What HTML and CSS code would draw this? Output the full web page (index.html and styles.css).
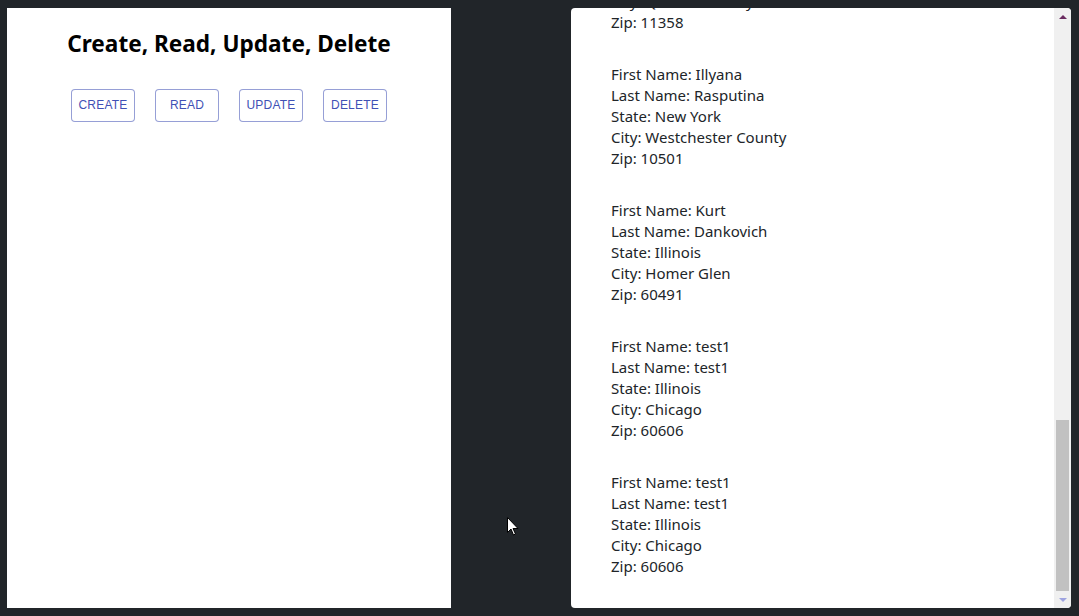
FILE: index.html
```html
<!DOCTYPE html>
<html>
<head>
<meta charset="utf-8">
<link rel="stylesheet" href="styles.css">
</head>
<body>
<div class="app">
  <section class="crud">
    <h1 class="title">Create, Read, Update, Delete</h1>
    <div class="actions">
      <button class="btn">CREATE</button>
      <button class="btn">READ</button>
      <button class="btn">UPDATE</button>
      <button class="btn">DELETE</button>
    </div>
  </section>
  <div class="gutter"></div>
  <section class="list">
    <div class="list-body">
      <div class="record">
        <div>First Name: Peter</div>
        <div>Last Name: Parker</div>
        <div>State: New York</div>
        <div>City: Queens County</div>
        <div>Zip: 11358</div>
      </div>
      <div class="record">
        <div>First Name: Illyana</div>
        <div>Last Name: Rasputina</div>
        <div>State: New York</div>
        <div>City: Westchester County</div>
        <div>Zip: 10501</div>
      </div>
      <div class="record">
        <div>First Name: Kurt</div>
        <div>Last Name: Dankovich</div>
        <div>State: Illinois</div>
        <div>City: Homer Glen</div>
        <div>Zip: 60491</div>
      </div>
      <div class="record">
        <div>First Name: test1</div>
        <div>Last Name: test1</div>
        <div>State: Illinois</div>
        <div>City: Chicago</div>
        <div>Zip: 60606</div>
      </div>
      <div class="record">
        <div>First Name: test1</div>
        <div>Last Name: test1</div>
        <div>State: Illinois</div>
        <div>City: Chicago</div>
        <div>Zip: 60606</div>
      </div>
    </div>
    <div class="scrollbar">
      <div class="sb-btn"><span class="arrow-up"></span></div>
      <div class="sb-track"><div class="sb-thumb"></div></div>
      <div class="sb-btn"><span class="arrow-down"></span></div>
    </div>
  </section>
</div>
<svg class="cursor" width="12" height="19" viewBox="0 0 12 19"><path d="M0.5 0.5 L0.5 15.5 L4 12 L6.5 18 L8.5 17 L6 11.5 L11 11.5 Z" fill="#fff" stroke="#000" stroke-width="1"/></svg>
</body>
</html>
```
FILE: styles.css
```css
html, body {
  margin: 0;
  padding: 0;
  background: #212529;
  height: 100%;
  overflow: hidden;
}
.app {
  display: flex;
  padding: 8px 8px 8px 7px;
  height: 616px;
  box-sizing: border-box;
}
.crud {
  width: 444px;
  height: 600px;
  background: #fff;
  display: flex;
  flex-direction: column;
  align-items: center;
}
.title {
  margin: 21px 0 0 0;
  font-family: "Noto Sans", "Open Sans", sans-serif;
  font-weight: 700;
  font-size: 22.6px;
  line-height: 30px;
  color: #000;
}
.actions {
  display: flex;
  gap: 20px;
  margin-top: 30px;
}
.btn {
  width: 64px;
  height: 33px;
  box-sizing: border-box;
  border: 1px solid rgba(63, 81, 181, 0.55);
  border-radius: 4px;
  background: #fff;
  color: #3f51b5;
  font-family: "Liberation Sans", Arial, sans-serif;
  font-size: 12px;
  padding: 0 0 2px 0;
  letter-spacing: 0.2px;
}
.gutter {
  width: 120px;
}
.list {
  width: 500px;
  height: 600px;
  background: #fff;
  border-radius: 4px;
  display: flex;
  overflow: hidden;
}
.list-body {
  flex: 1;
  display: flex;
  flex-direction: column;
  justify-content: flex-end;
  overflow: hidden;
  padding-left: 40px;
  font-family: "Noto Sans", "Open Sans", sans-serif;
  font-size: 15px;
  line-height: 21px;
  color: #212529;
}
.record {
  margin-bottom: 31px;
  flex-shrink: 0;
}
.scrollbar {
  width: 17px;
  background: #f0f0f0;
  display: flex;
  flex-direction: column;
}
.sb-btn {
  height: 17px;
  display: flex;
  align-items: center;
  justify-content: center;
}
.sb-track {
  flex: 1;
  display: flex;
  flex-direction: column;
  justify-content: flex-end;
}
.sb-thumb {
  height: 171px;
  margin: 0 2px;
  background: #c1c1c1;
}
.arrow-up {
  width: 0;
  height: 0;
  border-left: 4px solid transparent;
  border-right: 4px solid transparent;
  border-bottom: 4px solid #6a2b60;
}
.arrow-down {
  width: 0;
  height: 0;
  border-left: 4px solid transparent;
  border-right: 4px solid transparent;
  border-top: 4px solid #9ea3e0;
}
.cursor {
  position: absolute;
  left: 507px;
  top: 517px;
}
```
